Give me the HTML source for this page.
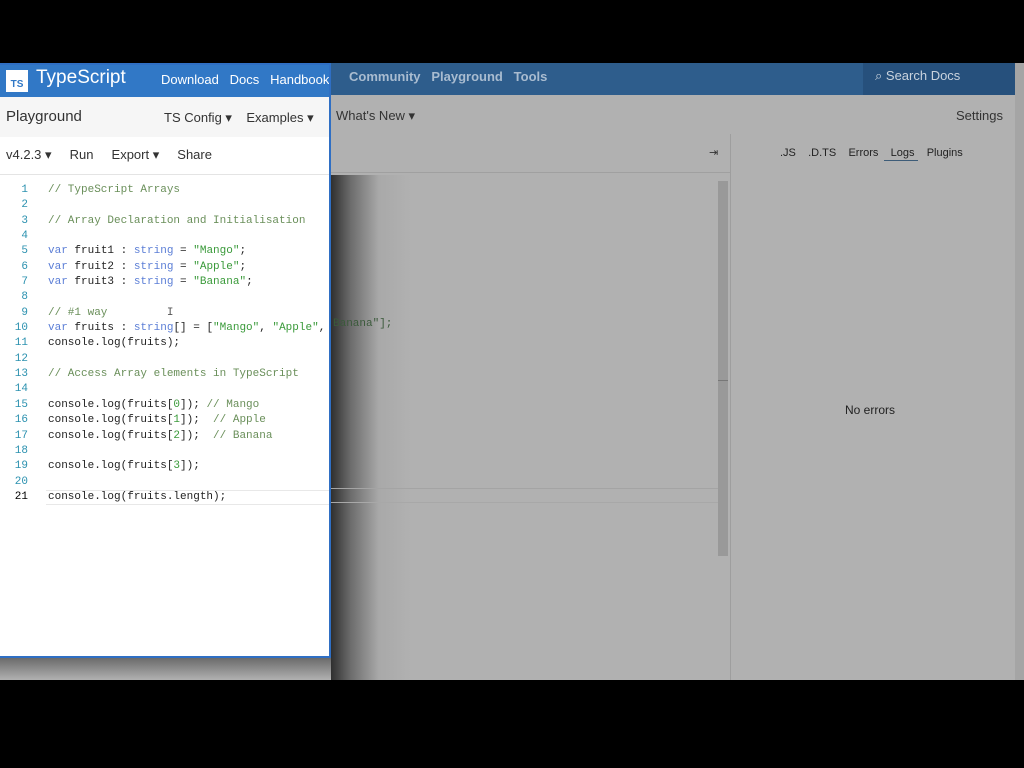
<!DOCTYPE html>
<html><head><meta charset="utf-8"><style>
*{margin:0;padding:0;box-sizing:border-box}
body{width:1024px;height:768px;background:#000;position:relative;overflow:hidden;font-family:"Liberation Sans",sans-serif}
.abs{position:absolute}
.mono{font-family:"Liberation Mono",monospace;font-size:11px;white-space:pre}
</style></head><body>
<div class="abs" style="left:0;top:63px;width:1024px;height:617px;background:#b1b1b1"></div>
<div class="abs" style="left:0;top:63px;width:1024px;height:32px;background:#2e5d8c"></div>
<div class="abs" style="left:863px;top:63px;width:152px;height:32px;background:#26507c"></div>
<div class="abs" style="left:1015px;top:63px;width:9px;height:617px;background:#a5a5a5"></div>
<div class="abs" style="left:331px;top:175px;width:80px;height:505px;background:linear-gradient(to right,rgba(40,40,40,.95) 0%,rgba(80,80,80,.7) 25%,rgba(150,150,150,.3) 60%,rgba(177,177,177,0) 100%)"></div>
<div class="abs" style="left:0;top:658px;width:331px;height:22px;background:linear-gradient(to bottom,rgba(60,60,60,.6),rgba(177,177,177,0))"></div>
<div class="abs" style="left:875px;top:68px;color:#c9d3de;font-size:13px">⌕ Search Docs</div>
<div class="abs" style="left:349px;top:69px;color:#a9bcd0;font-size:13px;font-weight:bold">Community&nbsp;&nbsp; Playground&nbsp;&nbsp; Tools</div>
<div class="abs" style="left:336px;top:108px;color:#333;font-size:13px">What's New ▾</div>
<div class="abs" style="left:956px;top:108px;color:#333;font-size:13px">Settings</div>
<div class="abs" style="left:331px;top:172px;width:399px;height:1px;background:#a0a0a0"></div>
<div class="abs" style="left:709px;top:146px;color:#333;font-size:11px">⇥</div>
<div class="abs" style="left:730px;top:134px;width:1px;height:546px;background:#9e9e9e"></div>
<div class="abs" style="left:718px;top:181px;width:10px;height:375px;background:#999"></div>
<div class="abs" style="left:718px;top:380px;width:10px;height:1px;background:#777"></div>
<div class="abs" style="left:331px;top:488px;width:387px;height:1px;background:#a4a4a4"></div>
<div class="abs" style="left:331px;top:502px;width:387px;height:1px;background:#a8a8a8"></div>
<div class="abs" style="left:780px;top:147px;color:#222;font-size:11px">.JS&nbsp;&nbsp;&nbsp; .D.TS&nbsp;&nbsp;&nbsp; Errors&nbsp;&nbsp;&nbsp; Logs&nbsp;&nbsp;&nbsp; Plugins</div>
<div class="abs" style="left:884px;top:160px;width:34px;height:1px;background:#3d5c78"></div>
<div class="abs" style="left:845px;top:403px;color:#222;font-size:12px">No errors</div>
<div class="abs mono" style="left:333px;top:318px;color:#3b5a3b">Banana"];</div>
<div class="abs" style="left:0;top:63px;width:331px;height:595px;background:#fff;border:2px solid #2f6fc4;border-left:none;overflow:hidden">
 <div class="abs" style="left:0;top:0;width:331px;height:32px;background:#3178c6"></div>
 <div class="abs" style="left:6px;top:5px;width:22px;height:22px;background:#fff;color:#3178c6;font-size:10px;font-weight:bold;text-align:center;line-height:30px">TS</div>
 <div class="abs" style="left:36px;top:2px;color:#fff;font-size:19px">TypeScript</div>
 <div class="abs" style="left:161px;top:7px;color:#fff;font-size:13px;white-space:nowrap">Download&nbsp;&nbsp; Docs&nbsp;&nbsp; Handbook</div>
 <div class="abs" style="left:0;top:32px;width:331px;height:40px;background:#f6f6f6"></div>
 <div class="abs" style="left:6px;top:43px;color:#333;font-size:15px">Playground</div>
 <div class="abs" style="left:164px;top:45px;color:#333;font-size:13px">TS Config ▾&nbsp;&nbsp;&nbsp; Examples ▾</div>
 <div class="abs" style="left:6px;top:82px;color:#333;font-size:13px">v4.2.3 ▾&nbsp;&nbsp;&nbsp;&nbsp; Run&nbsp;&nbsp;&nbsp;&nbsp; Export ▾&nbsp;&nbsp;&nbsp;&nbsp; Share</div>
 <div class="abs" style="left:0;top:109px;width:331px;height:1px;background:#e4e4e4"></div>
 <div class="abs" style="left:46px;top:425px;width:290px;height:15px;border-top:1px solid #e8e8e8;border-bottom:1px solid #e8e8e8"></div>
 <div class="abs mono" style="left:0;top:118px;width:28px;text-align:right;line-height:15.35px;color:#2b91af">1
2
3
4
5
6
7
8
9
10
11
12
13
14
15
16
17
18
19
20
<span style="color:#000">21</span></div>
 <div class="abs mono" style="left:48px;top:118px;line-height:15.35px;color:#222"><span style="color:#6a8f5a">// TypeScript Arrays</span>

<span style="color:#6a8f5a">// Array Declaration and Initialisation</span>

<span style="color:#5b7ed6">var</span> fruit1 : <span style="color:#5b7ed6">string</span> = <span style="color:#3a9a3a">"Mango"</span>;
<span style="color:#5b7ed6">var</span> fruit2 : <span style="color:#5b7ed6">string</span> = <span style="color:#3a9a3a">"Apple"</span>;
<span style="color:#5b7ed6">var</span> fruit3 : <span style="color:#5b7ed6">string</span> = <span style="color:#3a9a3a">"Banana"</span>;

<span style="color:#6a8f5a">// #1 way</span>         <span style="color:#555">I</span>
<span style="color:#5b7ed6">var</span> fruits : <span style="color:#5b7ed6">string</span>[] = [<span style="color:#3a9a3a">"Mango"</span>, <span style="color:#3a9a3a">"Apple"</span>, <span style="color:#3a9a3a">"Banana"</span>];
console.log(fruits);

<span style="color:#6a8f5a">// Access Array elements in TypeScript</span>

console.log(fruits[<span style="color:#3a9a3a">0</span>]); <span style="color:#6a8f5a">// Mango</span>
console.log(fruits[<span style="color:#3a9a3a">1</span>]);  <span style="color:#6a8f5a">// Apple</span>
console.log(fruits[<span style="color:#3a9a3a">2</span>]);  <span style="color:#6a8f5a">// Banana</span>

console.log(fruits[<span style="color:#3a9a3a">3</span>]);

console.log(fruits.length);</div>
</div>
</body></html>
